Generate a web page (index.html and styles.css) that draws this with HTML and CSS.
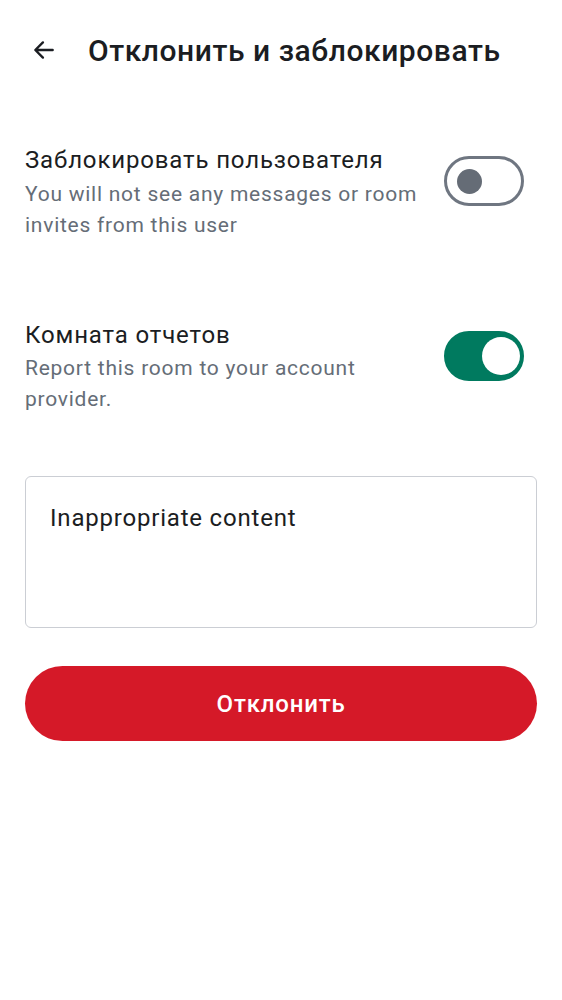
FILE: index.html
```html
<!DOCTYPE html>
<html lang="ru">
<head>
<meta charset="utf-8">
<link rel="stylesheet" href="styles.css">
</head>
<body>
<header class="topbar">
  <span class="back">
    <svg width="26" height="26" viewBox="0 0 24 24" fill="none" stroke="#1b1d22" stroke-width="2.2" stroke-linecap="round" stroke-linejoin="round"><path d="M20 12H4.5M11 5l-7 7 7 7"/></svg>
  </span>
  <h1 class="title">Отклонить и заблокировать</h1>
</header>
<main class="content">
  <section class="row row-first">
    <div class="texts">
      <div class="row-title">Заблокировать пользователя</div>
      <div class="row-sub">You will not see any messages or room invites from this user</div>
    </div>
    <span class="switch"><span class="thumb"></span></span>
  </section>
  <section class="row row-second">
    <div class="texts">
      <div class="row-title">Комната отчетов</div>
      <div class="row-sub">Report this room to your account provider.</div>
    </div>
    <span class="switch on"><span class="thumb"></span></span>
  </section>
  <div class="reason">Inappropriate content</div>
  <button class="decline">Отклонить</button>
</main>
</body>
</html>
```
FILE: styles.css
```css
html, body {
  margin: 0;
  padding: 0;
  background: #ffffff;
  font-family: Roboto, "Noto Sans", sans-serif;
  color: #1b1d22;
}
.topbar {
  display: flex;
  align-items: center;
  height: 100px;
  padding-left: 31px;
  box-sizing: border-box;
}
.back {
  display: flex;
  width: 26px;
  height: 26px;
  margin-right: 31px;
}
.title {
  margin: 0;
  font-size: 30px;
  font-weight: 500;
  letter-spacing: 0.55px;
}
.content {
  padding: 0 25px;
  display: flex;
  flex-direction: column;
}
.row {
  display: flex;
  align-items: flex-start;
  justify-content: space-between;
}
.row-first {
  margin-top: 45px;
}
.row-second {
  margin-top: 79px;
}
.texts {
  width: 405px;
}
.row-title {
  font-size: 24px;
  line-height: 30px;
  letter-spacing: 0.85px;
}
.row-sub {
  font-size: 21px;
  line-height: 31px;
  letter-spacing: 0.75px;
  color: #656d77;
  margin-top: 3px;
}
.row-first .row-sub {
  margin-top: 4px;
}
.switch {
  display: flex;
  align-items: center;
  width: 80px;
  height: 50px;
  box-sizing: border-box;
  border: 3px solid #6f7681;
  border-radius: 25px;
  margin-top: 11px;
  margin-right: 13px;
  padding-left: 10px;
}
.switch .thumb {
  width: 25px;
  height: 25px;
  border-radius: 50%;
  background: #656c76;
}
.switch.on {
  background: #007a5f;
  border-color: #007a5f;
  padding-left: 35px;
  margin-top: 11px;
}
.switch.on .thumb {
  width: 38px;
  height: 38px;
  background: #ffffff;
}
.reason {
  margin-top: 61px;
  height: 152px;
  box-sizing: border-box;
  border: 1.5px solid #cbced4;
  border-radius: 6px;
  padding: 27px 24px;
  font-size: 24px;
  line-height: 28px;
  letter-spacing: 0.8px;
}
.decline {
  margin-top: 38px;
  height: 75px;
  border: none;
  border-radius: 38px;
  background: #d51928;
  color: #ffffff;
  font-family: Roboto, "Noto Sans", sans-serif;
  font-size: 24px;
  font-weight: 500;
  letter-spacing: 0.8px;
}
```
